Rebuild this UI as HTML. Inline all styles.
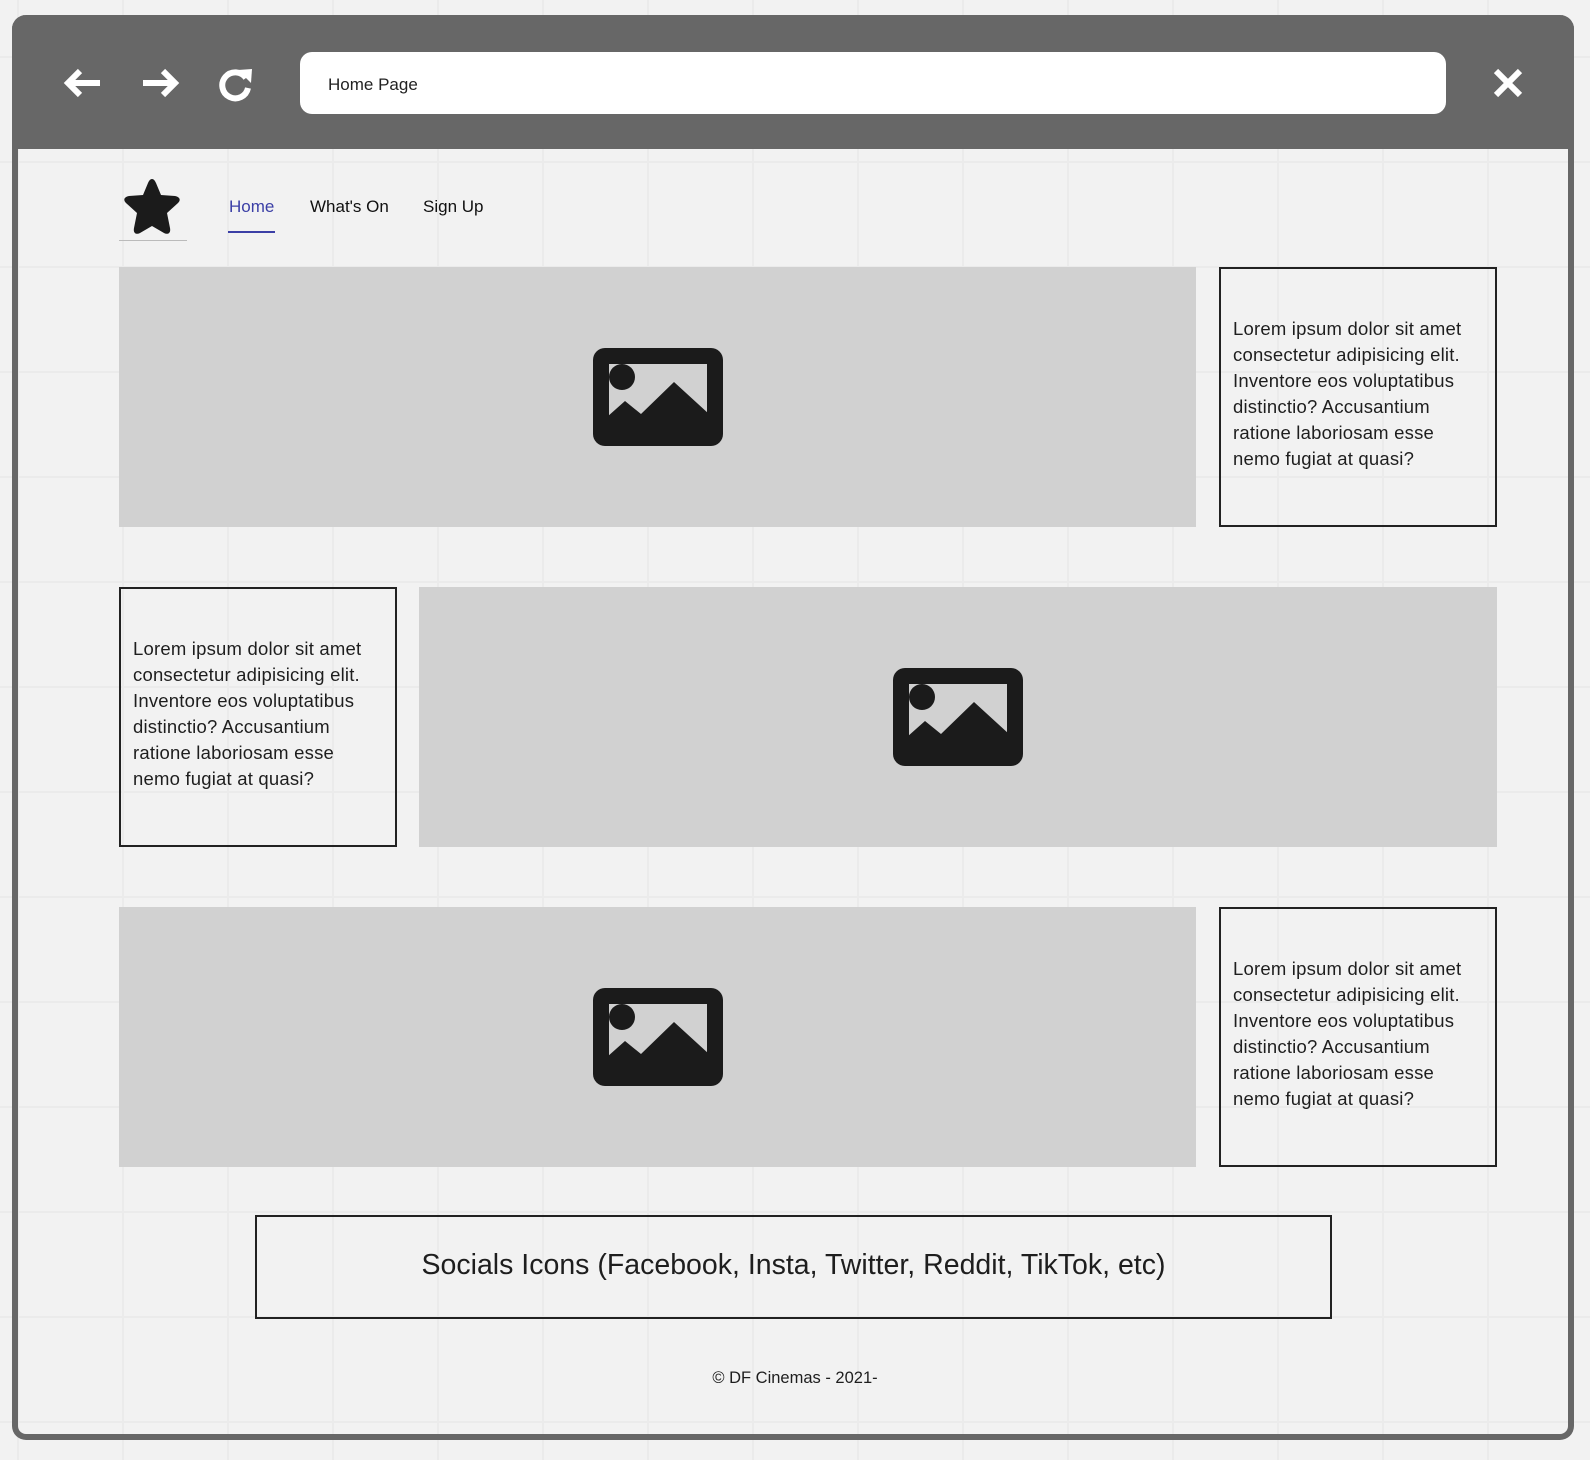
<!DOCTYPE html>
<html><head><meta charset="utf-8"><style>
*{margin:0;padding:0;box-sizing:border-box}
body{width:1590px;height:1460px;position:relative;overflow:hidden;background:#f2f2f2;
background-image:linear-gradient(to right,#ebebeb 2px,transparent 2px),linear-gradient(to bottom,#ebebeb 2px,transparent 2px);
background-size:105px 105px;background-position:17px 56px;font-family:"Liberation Sans",sans-serif}
.frame{position:absolute;left:12px;top:15px;width:1562px;height:1425px;border:6px solid #676767;border-top:0;border-radius:14px}
.head{position:absolute;left:12px;top:15px;width:1562px;height:134px;background:#676767;border-radius:14px 14px 0 0}
.addr{position:absolute;left:300px;top:52px;width:1146px;height:62px;background:#fff;border-radius:12px;font-size:17px;color:#222;padding:23px 0 0 28px}
.img{position:absolute;background:#d1d1d1;display:flex;align-items:center;justify-content:center}
.txt{position:absolute;border:2px solid #222;font-size:18.5px;line-height:26px;color:#1e1e1e;padding:47px 24px 0 12px;letter-spacing:0.2px}
.nav{position:absolute;top:197px;font-size:17px;color:#111}
</style></head><body>
<div class="head"></div>
<div class="frame"></div>
<svg style="position:absolute;left:62px;top:66px" width="200" height="36" viewBox="0 0 200 36">
<g stroke="#fff" stroke-width="6" fill="none" stroke-linecap="butt" stroke-linejoin="miter">
<path d="M38 17H6M18 5L6 17L18 29"/>
<path d="M81 17H113M101 5L113 17L101 29"/>
<path d="M184 12A13 13 0 1 0 186 22"/>
</g>
<path d="M176 4L190 3L189 17Z" fill="#fff"/>
</svg>
<div class="addr">Home Page</div>
<svg style="position:absolute;left:1493px;top:68px" width="30" height="30"><path d="M3 3L27 27M27 3L3 27" stroke="#fff" stroke-width="6"/></svg>
<svg style="position:absolute;left:119px;top:176px" width="66" height="64" viewBox="0 0 66 64"><path d="M33 3C35 3 36 5 37 7L42 19L56 20C61 21 62 24 59 27L48 37L51 52C52 57 49 59 45 57L33 50L21 57C17 59 14 57 15 52L18 37L7 27C4 24 5 21 10 20L24 19L29 7C30 5 31 3 33 3Z" fill="#1b1b1b"/></svg>
<div style="position:absolute;left:119px;top:240px;width:68px;height:1px;background:#bbb"></div>
<div class="nav" style="left:229px;color:#3b3fa6">Home</div>
<div style="position:absolute;left:228px;top:231px;width:47px;height:2px;background:#3b3fa6"></div>
<div class="nav" style="left:310px">What's On</div>
<div class="nav" style="left:423px">Sign Up</div>
<div class="img" style="left:119px;top:267px;width:1077px;height:260px"><svg width="130" height="98" viewBox="0 0 130 98"><rect width="130" height="98" rx="12" fill="#1b1b1b"/><rect x="16" y="16" width="98" height="66" fill="#d1d1d1"/><circle cx="29" cy="29" r="13" fill="#1b1b1b"/><path d="M14 69L32 53L48 66L81 34L116 66V84H14Z" fill="#1b1b1b"/></svg></div>
<div class="txt" style="left:1219px;top:267px;width:278px;height:260px">Lorem ipsum dolor sit amet consectetur adipisicing elit. Inventore eos voluptatibus distinctio? Accusantium ratione laboriosam esse nemo fugiat at quasi?</div>
<div class="txt" style="left:119px;top:587px;width:278px;height:260px">Lorem ipsum dolor sit amet consectetur adipisicing elit. Inventore eos voluptatibus distinctio? Accusantium ratione laboriosam esse nemo fugiat at quasi?</div>
<div class="img" style="left:419px;top:587px;width:1078px;height:260px"><svg width="130" height="98" viewBox="0 0 130 98"><rect width="130" height="98" rx="12" fill="#1b1b1b"/><rect x="16" y="16" width="98" height="66" fill="#d1d1d1"/><circle cx="29" cy="29" r="13" fill="#1b1b1b"/><path d="M14 69L32 53L48 66L81 34L116 66V84H14Z" fill="#1b1b1b"/></svg></div>
<div class="img" style="left:119px;top:907px;width:1077px;height:260px"><svg width="130" height="98" viewBox="0 0 130 98"><rect width="130" height="98" rx="12" fill="#1b1b1b"/><rect x="16" y="16" width="98" height="66" fill="#d1d1d1"/><circle cx="29" cy="29" r="13" fill="#1b1b1b"/><path d="M14 69L32 53L48 66L81 34L116 66V84H14Z" fill="#1b1b1b"/></svg></div>
<div class="txt" style="left:1219px;top:907px;width:278px;height:260px">Lorem ipsum dolor sit amet consectetur adipisicing elit. Inventore eos voluptatibus distinctio? Accusantium ratione laboriosam esse nemo fugiat at quasi?</div>
<div style="position:absolute;left:255px;top:1215px;width:1077px;height:104px;border:2px solid #222;display:flex;align-items:center;justify-content:center;font-size:28.5px;color:#1e1e1e;padding-bottom:4px">Socials Icons (Facebook, Insta, Twitter, Reddit, TikTok, etc)</div>
<div style="position:absolute;left:0;width:1590px;top:1369px;text-align:center;font-size:16.5px;color:#1e1e1e;padding-left:0">© DF Cinemas - 2021-</div>
</body></html>
